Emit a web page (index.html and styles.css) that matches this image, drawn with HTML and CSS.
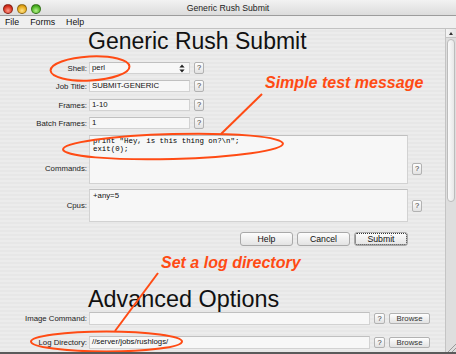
FILE: index.html
```html
<!DOCTYPE html>
<html lang="en">
<head>
    <meta charset="UTF-8">
    <title>Generic Rush Submit</title>
    <link rel="stylesheet" href="styles.css">
</head>
<body>
    <div class="window">
        <div class="titlebar">
            <div class="lights">
                <span class="light red"></span>
                <span class="light yellow"></span>
                <span class="light green"></span>
            </div>
            <div class="title">Generic Rush Submit</div>
        </div>
        <div class="menubar">
            <span>File</span>
            <span>Forms</span>
            <span>Help</span>
        </div>
        <div class="main">
            <div class="content">
                <h1>Generic Rush Submit</h1>

                <div class="row row-shell">
                    <label>Shell:</label>
                    <div class="field short select">
                        <span>perl</span>
                        <svg width="6" height="9" viewBox="0 0 6 9"><path d="M3 0.5 L5.6 3.6 L0.4 3.6 Z M3 8.5 L5.6 5.4 L0.4 5.4 Z" fill="#222"/></svg>
                    </div>
                    <button class="q">?</button>
                </div>
                <div class="row row-job">
                    <label>Job Title:</label>
                    <div class="field short">SUBMIT-GENERIC</div>
                    <button class="q">?</button>
                </div>
                <div class="row row-frames">
                    <label>Frames:</label>
                    <div class="field short">1-10</div>
                    <button class="q">?</button>
                </div>
                <div class="row row-batch">
                    <label>Batch Frames:</label>
                    <div class="field short">1</div>
                    <button class="q">?</button>
                </div>

                <div class="row area-row row-commands">
                    <label>Commands:</label>
                    <div class="field area code">print "Hey, is this thing on?\n";<br>exit(0);</div>
                    <button class="q">?</button>
                </div>
                <div class="row area-row row-cpus">
                    <label>Cpus:</label>
                    <div class="field area">+any=5</div>
                    <button class="q">?</button>
                </div>

                <div class="actions">
                    <button class="btn">Help</button>
                    <button class="btn">Cancel</button>
                    <button class="btn default">Submit</button>
                </div>

                <h2>Advanced Options</h2>

                <div class="row adv-row row-image">
                    <label>Image Command:</label>
                    <div class="field wide"></div>
                    <button class="q">?</button>
                    <button class="browse">Browse</button>
                </div>
                <div class="row adv-row row-log">
                    <label>Log Directory:</label>
                    <div class="field wide">//server/jobs/rushlogs/</div>
                    <button class="q">?</button>
                    <button class="browse">Browse</button>
                </div>
            </div>
            <div class="scrollbar">
                <div class="arrow"></div>
                <div class="thumb"></div>
                <div class="grip"></div>
            </div>
        </div>

        <!-- annotations drawn over the screenshot -->
        <svg class="marks" width="456" height="354" viewBox="0 0 456 354">
            <g fill="none" stroke="#ff4b14" stroke-width="2">
                <ellipse cx="90" cy="68.5" rx="39.5" ry="12" transform="rotate(-3 90 68.5)"/>
                <ellipse cx="173" cy="146.5" rx="110" ry="12.5" transform="rotate(-1.5 173 146.5)"/>
                <path d="M221 134 L262 94"/>
                <ellipse cx="106.5" cy="341.5" rx="75.5" ry="10"/>
                <path d="M115 331 L158 273"/>
            </g>
        </svg>
        <div class="note note-msg">Simple test message</div>
        <div class="note note-log">Set a log directory</div>
    </div>
</body>
</html>
```

FILE: styles.css
```css
body {
    margin: 0;
    font-family: "Liberation Sans", Arial, sans-serif;
    color: #1a1a1a;
}
.window {
    position: relative;
    width: 456px;
    height: 354px;
    overflow: hidden;
    box-sizing: border-box;
    background: repeating-linear-gradient(#ececec 0 2px, #e7e7e7 2px 4px);
    border-bottom: 2px solid #5a5a5a;
}
.titlebar {
    position: relative;
    height: 15px;
    border-bottom: 1px solid #9c9c9c;
    background: linear-gradient(#f2f2f2, #dcdcdc);
    display: flex;
    align-items: center;
    justify-content: center;
}
.lights {
    position: absolute;
    left: 3px;
    top: 4px;
    display: flex;
    gap: 4px;
}
.light {
    width: 10px;
    height: 10px;
    border-radius: 50%;
    box-sizing: border-box;
    border: 1px solid rgba(0, 0, 0, 0.35);
}
.light.red {
    background: radial-gradient(circle at 50% 70%, #ff9c8c, #d8321f 60%, #9c1a10);
}
.light.yellow {
    background: radial-gradient(circle at 50% 70%, #ffe38a, #e6a91a 60%, #a8700a);
}
.light.green {
    background: radial-gradient(circle at 50% 70%, #b6f28c, #4fb526 60%, #2d7a12);
}
.title {
    font-size: 8.7px;
    color: #222;
    padding-top: 1px;
}
.menubar {
    height: 12px;
    border-bottom: 1px solid #c2c2c2;
    background: #efefef;
    display: flex;
    gap: 11px;
    padding-left: 5px;
    font-size: 8.8px;
    line-height: 13px;
    color: #111;
}
.main {
    display: flex;
    height: 323px;
}
.content {
    width: 446px;
    flex: none;
    border-right: 1px solid #c4c4c4;
    box-sizing: border-box;
}
h1, h2 {
    font-size: 23px;
    font-weight: normal;
    line-height: 23px;
    margin: 1px 0 0 88px;
    color: #111;
}
h2 {
    font-size: 23.4px;
    margin-top: 42px;
}
.row {
    display: flex;
    align-items: center;
    height: 12px;
    font-size: 7.8px;
}
.row label {
    width: 87px;
    flex: none;
    text-align: right;
    color: #222;
}
.field {
    margin-left: 2px;
    box-sizing: border-box;
    height: 100%;
    background: #f7f7f7;
    border: 1px solid #d2d2d2;
    border-top-color: #c0c0c0;
    padding: 0 2px;
    line-height: 10px;
    color: #111;
    white-space: nowrap;
}
.short {
    width: 101px;
}
.select {
    display: flex;
    align-items: center;
    justify-content: space-between;
    padding-right: 4px;
}
.row-shell {
    margin-top: 9px;
}
.row-job {
    margin-top: 6px;
}
.row-frames {
    margin-top: 7px;
}
.row-batch {
    margin-top: 6px;
}
.q {
    box-sizing: border-box;
    width: 10px;
    height: 12px;
    margin-left: 4px;
    padding: 0;
    border: 1px solid #b2b2b2;
    border-radius: 2px;
    background: linear-gradient(#fefefe, #e2e2e2);
    font-family: "Liberation Sans", Arial, sans-serif;
    font-size: 7.5px;
    line-height: 10px;
    color: #333;
}
.row-shell .q, .row-job .q, .row-frames .q, .row-batch .q {
    margin-left: 4px;
}
.area-row {
    align-items: flex-start;
}
.area {
    width: 319px;
    padding: 1px 3px;
    line-height: 9px;
}
.code {
    font-family: "Liberation Mono", "Courier New", monospace;
    font-size: 7.4px;
    line-height: 8px;
    color: #000;
}
.row-commands {
    margin-top: 6px;
    height: 49px;
}
.row-commands label {
    align-self: flex-end;
    margin-bottom: 11px;
}
.row-commands .q {
    align-self: flex-end;
    margin-bottom: 9px;
}
.row-cpus {
    margin-top: 5px;
    height: 33px;
}
.row-cpus label, .row-cpus .q {
    align-self: center;
}
.actions {
    display: flex;
    gap: 4px;
    margin: 10px 0 0 240px;
}
.btn {
    box-sizing: border-box;
    width: 53px;
    height: 14px;
    padding: 0;
    border: 1px solid #a9a9a9;
    border-radius: 3px;
    background: linear-gradient(#fdfdfd, #e3e3e3);
    font-family: "Liberation Sans", Arial, sans-serif;
    font-size: 8.7px;
    line-height: 12px;
    color: #111;
}
.btn.default {
    width: 54px;
    outline: 1px dotted #333;
    outline-offset: -2px;
}
.adv-row {
    height: 13px;
}
.row-image {
    margin-top: 1px;
}
.row-log {
    margin-top: 11px;
}
.wide {
    width: 281px;
}
.adv-row .q {
    width: 11px;
    height: 11px;
    line-height: 9px;
}
.browse {
    box-sizing: border-box;
    width: 41px;
    height: 11px;
    margin-left: 4px;
    padding: 0;
    border: 1px solid #b2b2b2;
    border-radius: 2px;
    background: linear-gradient(#fefefe, #e2e2e2);
    font-family: "Liberation Sans", Arial, sans-serif;
    font-size: 7.8px;
    line-height: 9px;
    color: #333;
}
.scrollbar {
    position: relative;
    width: 10px;
    flex: none;
    background: #dedede;
}
.arrow {
    height: 8px;
    border-bottom: 1px solid #c4c4c4;
    background: linear-gradient(90deg, #f4f4f4, #e4e4e4);
    display: flex;
    justify-content: center;
    align-items: center;
}
.arrow::before {
    content: "";
    border-left: 2.5px solid transparent;
    border-right: 2.5px solid transparent;
    border-bottom: 3px solid #333;
}
.thumb {
    margin: 1px 1px 0;
    height: 161px;
    border: 1px solid #bcbcbc;
    border-radius: 4px;
    background: linear-gradient(90deg, #fafafa, #e8e8e8);
}
.grip {
    position: absolute;
    right: 0;
    bottom: 0;
    width: 10px;
    height: 10px;
    background: repeating-linear-gradient(135deg, transparent 0 2px, #9a9a9a 2px 3px);
    clip-path: polygon(100% 0, 100% 100%, 0 100%);
}
.marks {
    position: absolute;
    left: 0;
    top: 0;
    pointer-events: none;
}
.note {
    position: absolute;
    font-size: 16px;
    line-height: 16px;
    font-weight: bold;
    font-style: italic;
    color: #ff4b14;
    white-space: nowrap;
}
.note-msg {
    left: 265px;
    top: 75px;
}
.note-log {
    left: 161px;
    top: 255px;
}
```
